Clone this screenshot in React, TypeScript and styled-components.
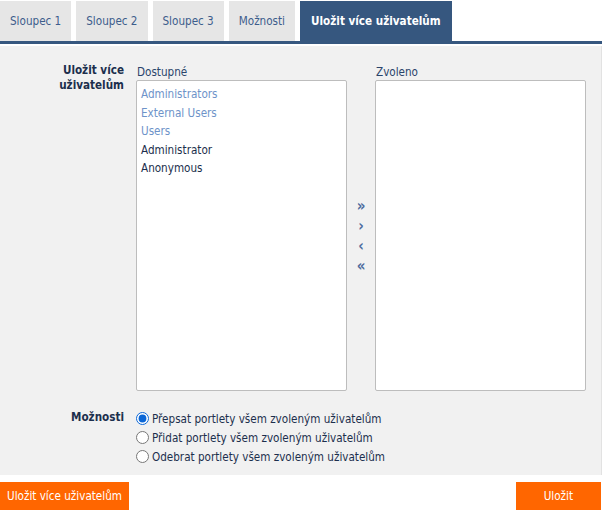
import React, { useState } from 'react';
import styled, { createGlobalStyle } from 'styled-components';

const GlobalStyle = createGlobalStyle`
  body {
    margin: 0;
    background: #ffffff;
    font-family: "DejaVu Sans Condensed", "DejaVu Sans", sans-serif;
    font-size: 11.6px;
    color: #1c2f4d;
  }
`;

const tabs = ['Sloupec 1', 'Sloupec 2', 'Sloupec 3', 'Možnosti', 'Uložit více uživatelům'];

const available = [
  { name: 'Administrators', group: true },
  { name: 'External Users', group: true },
  { name: 'Users', group: true },
  { name: 'Administrator', group: false },
  { name: 'Anonymous', group: false },
];

const options = [
  'Přepsat portlety všem zvoleným uživatelům',
  'Přidat portlety všem zvoleným uživatelům',
  'Odebrat portlety všem zvoleným uživatelům',
];

const App: React.FC = () => {
  const [mode, setMode] = useState(0);
  return (
    <>
      <GlobalStyle />
      <Page>
        <TabBar>
          {tabs.map((t, i) => (
            <Tab key={t} active={i === tabs.length - 1}>
              {t}
            </Tab>
          ))}
        </TabBar>
        <Panel>
          <Label>Uložit více uživatelům</Label>
          <Lists>
            <ListColumn>
              <ListTitle>Dostupné</ListTitle>
              <ListBox>
                {available.map((u) => (
                  <ListItem key={u.name} group={u.group}>
                    {u.name}
                  </ListItem>
                ))}
              </ListBox>
            </ListColumn>
            <Arrows>
              <Arrow>»</Arrow>
              <Arrow>›</Arrow>
              <Arrow>‹</Arrow>
              <Arrow>«</Arrow>
            </Arrows>
            <ListColumn>
              <ListTitle>Zvoleno</ListTitle>
              <ListBox />
            </ListColumn>
          </Lists>
          <Label>Možnosti</Label>
          <Radios>
            {options.map((o, i) => (
              <RadioRow key={o}>
                <Radio type="radio" name="mode" checked={mode === i} onChange={() => setMode(i)} />
                {o}
              </RadioRow>
            ))}
          </Radios>
        </Panel>
        <Footer>
          <Button>Uložit více uživatelům</Button>
          <Button wide>Uložit</Button>
        </Footer>
      </Page>
    </>
  );
};

export default App;

const Page = styled.div`
  width: 602px;
`;

const TabBar = styled.div`
  display: flex;
  gap: 5px;
  padding-top: 1px;
  border-bottom: 3px solid #36577f;
`;

const Tab = styled.div<{ active?: boolean }>`
  height: 40px;
  display: flex;
  align-items: center;
  padding: 0 ${(p) => (p.active ? '11px' : '10px')};
  background: ${(p) => (p.active ? '#36577f' : '#e6e6e6')};
  color: ${(p) => (p.active ? '#ffffff' : '#3d5d8c')};
  font-weight: ${(p) => (p.active ? 'bold' : 'normal')};
  white-space: nowrap;
`;

const Panel = styled.div`
  margin-top: 2px;
  background: #f1f1f1;
  border-right: 1px solid #e2e2e2;
  display: grid;
  grid-template-columns: 124px 1fr;
  align-content: start;
  column-gap: 12px;
  row-gap: 18px;
  padding: 16px 16px 0 0;
  height: 429px;
  box-sizing: border-box;
`;

const Label = styled.div`
  text-align: right;
  font-weight: bold;
  color: #1c2f4d;
  line-height: 15px;
  padding-top: 1px;
`;

const Lists = styled.div`
  display: flex;
`;

const ListColumn = styled.div`
  display: flex;
  flex-direction: column;
  width: 211px;
`;

const ListTitle = styled.div`
  color: #2a446b;
  line-height: 15px;
  padding: 3px 0 0 1px;
  height: 15px;
`;

const ListBox = styled.div`
  height: 311px;
  box-sizing: border-box;
  background: #ffffff;
  border: 1px solid #bdbdbd;
  border-radius: 2px;
  padding: 4px 4px;
`;

const ListItem = styled.div<{ group?: boolean }>`
  line-height: 18.5px;
  color: ${(p) => (p.group ? '#6e93c9' : '#1c2f4d')};
`;

const Arrows = styled.div`
  width: 28px;
  display: flex;
  flex-direction: column;
  justify-content: center;
  align-items: center;
  padding-top: 18px;
`;

const Arrow = styled.div`
  height: 20px;
  line-height: 20px;
  font-size: 15px;
  font-weight: bold;
  color: #4d6c9e;
  text-align: center;
`;

const Radios = styled.div`
  display: flex;
  flex-direction: column;
`;

const RadioRow = styled.label`
  display: flex;
  align-items: center;
  height: 19px;
  color: #1c2f4d;
  white-space: nowrap;
`;

const Radio = styled.input`
  width: 13px;
  height: 13px;
  margin: 0 3px 0 0;
  accent-color: #0b66d6;
`;

const Footer = styled.div`
  display: flex;
  justify-content: space-between;
  padding-top: 7px;
`;

const Button = styled.button<{ wide?: boolean }>`
  height: 28px;
  border: none;
  border-radius: 0;
  background: #ff6600;
  color: #ffffff;
  font-family: inherit;
  font-size: 11.6px;
  padding: 0 ${(p) => (p.wide ? '28px' : '7px')};
  min-width: ${(p) => (p.wide ? '84px' : 'auto')};
  margin-right: ${(p) => (p.wide ? '1px' : '0')};
`;
